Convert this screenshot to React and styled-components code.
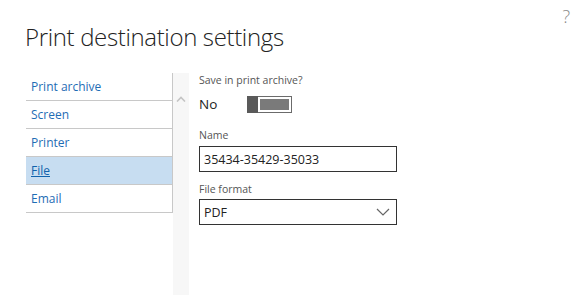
import React from 'react';
import styled, { createGlobalStyle } from 'styled-components';

const GlobalStyle = createGlobalStyle`
  html, body {
    margin: 0;
    padding: 0;
    background: #fff;
    font-family: "Segoe UI", "Open Sans", sans-serif;
  }
`;

const Page = styled.div`
  position: relative;
  width: 584px;
  height: 295px;
  overflow: hidden;
  display: flex;
  flex-direction: column;
`;

const Help = styled.span`
  position: absolute;
  top: 4px;
  right: 14px;
  font-size: 18px;
  font-weight: 300;
  color: #8a8a8a;
`;

const Title = styled.h1`
  margin: 0;
  padding: 22px 0 0 25px;
  height: 51px;
  box-sizing: border-box;
  font-size: 24px;
  font-weight: 300;
  line-height: 30px;
  letter-spacing: -0.35px;
  color: #222;
`;

const Body = styled.div`
  flex: 1;
  display: flex;
  padding-left: 26px;
`;

const Nav = styled.ul`
  list-style: none;
  margin: 0;
  padding: 0;
  width: 146px;
  align-self: flex-start;
  border-right: 1px solid #c8c8c8;
  margin-top: 22px;
`;

const NavItem = styled.li`
  height: 27px;
  border-bottom: 1px solid #c8c8c8;
  display: flex;
  align-items: center;
  padding-left: 5px;
  font-size: 12px;
  color: ${p => (p.$active ? '#1062ac' : '#1f6db5')};
  background: ${p => (p.$active ? '#c7ddf1' : 'transparent')};
  text-decoration: ${p => (p.$active ? 'underline' : 'none')};
`;

const Scroll = styled.div`
  width: 16px;
  margin-top: 22px;
  background: #f7f7f7;
  display: flex;
  justify-content: center;
  padding-top: 12px;
  box-sizing: border-box;
`;

const Form = styled.div`
  display: flex;
  flex-direction: column;
  padding: 22px 0 0 10px;
  width: 198px;
`;

const Label = styled.div`
  font-size: 10.5px;
  color: #555;
  line-height: 14px;
  margin-bottom: ${p => p.$gap || '4px'};
`;

const ToggleRow = styled.div`
  display: flex;
  align-items: center;
  gap: 28px;
  height: 20px;
  margin-bottom: 14px;
`;

const ToggleText = styled.span`
  font-size: 13.5px;
  color: #222;
  width: 20px;
`;

const Toggle = styled.div`
  display: flex;
  width: 45px;
  height: 17px;
  background: #6b6b6b;
  box-sizing: border-box;
`;

const Knob = styled.div`
  width: 11px;
  background: #5a5a5a;
`;

const Track = styled.div`
  flex: 1;
  margin: 1px 1px 1px 0;
  border: 2px solid #fff;
  background: #7a7a7a;
`;

const Field = styled.div`
  height: 26px;
  border: 1px solid #333;
  box-sizing: border-box;
  display: flex;
  align-items: center;
  justify-content: space-between;
  padding: 0 6px 0 4px;
  font-size: 12.5px;
  color: #222;
  margin-bottom: ${p => p.$mb || '0'};
`;

const Chevron = () => (
  <svg width="14" height="8" viewBox="0 0 14 8">
    <path d="M1 1 L7 7 L13 1" fill="none" stroke="#666" strokeWidth="1.2" />
  </svg>
);

const Up = () => (
  <svg width="10" height="6" viewBox="0 0 10 6">
    <path d="M1 5.5 L5 1.5 L9 5.5" fill="none" stroke="#c4c4c4" strokeWidth="1.6" />
  </svg>
);

const items = ['Print archive', 'Screen', 'Printer', 'File', 'Email'];

export default function App() {
  return (
    <Page>
      <GlobalStyle />
      <Help>?</Help>
      <Title>Print destination settings</Title>
      <Body>
        <Nav>
          {items.map(i => (
            <NavItem key={i} $active={i === 'File'}>{i}</NavItem>
          ))}
        </Nav>
        <Scroll>
          <div><Up /></div>
        </Scroll>
        <Form>
          <Label $gap="7px">Save in print archive?</Label>
          <ToggleRow>
            <ToggleText>No</ToggleText>
            <Toggle>
              <Knob />
              <Track />
            </Toggle>
          </ToggleRow>
          <Label>Name</Label>
          <Field $mb="10px">35434-35429-35033</Field>
          <Label $gap="3px">File format</Label>
          <Field>
            PDF
            <Chevron />
          </Field>
        </Form>
      </Body>
    </Page>
  );
}
